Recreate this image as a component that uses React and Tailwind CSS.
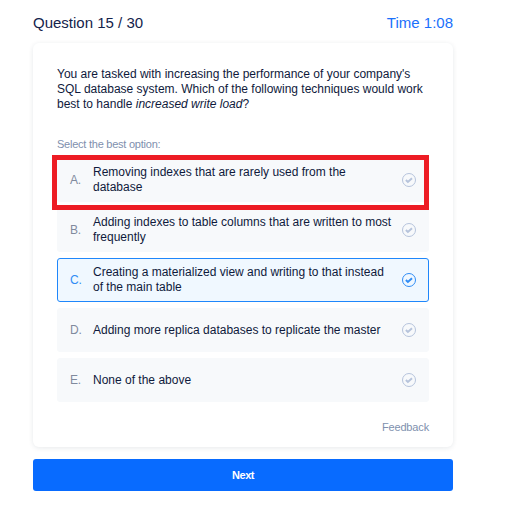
const options = [
  { letter: 'A.', lines: ['Removing indexes that are rarely used from the', 'database'], marked: true },
  { letter: 'B.', lines: ['Adding indexes to table columns that are written to most', 'frequently'] },
  { letter: 'C.', lines: ['Creating a materialized view and writing to that instead', 'of the main table'], selected: true },
  { letter: 'D.', lines: ['Adding more replica databases to replicate the master'] },
  { letter: 'E.', lines: ['None of the above'] },
];

function CheckCircle({ className }) {
  return (
    <svg className={className} width="14" height="14" viewBox="0 0 14 14" fill="none" stroke="currentColor">
      <circle cx="7" cy="7" r="6.5" strokeWidth="1" />
      <path d="M3.9 7 L5.9 9 L10 5.2" strokeWidth="1.9" />
    </svg>
  );
}

function Option({ letter, lines, selected, marked }) {
  return (
    <li
      className={`relative flex h-11 items-center rounded-[3px] border px-3 ${
        selected ? 'border-[#1f87fb] bg-[#f0f8ff]' : 'border-[#f7f9fb] bg-[#f7f9fb]'
      } ${marked ? 'z-10' : ''}`}
    >
      <span className={`w-[23px] shrink-0 text-[12px] tracking-[-0.2px] ${selected ? 'text-[#2f8cf5]' : 'text-[#808a9d]'}`}>{letter}</span>
      <span className="grow text-[12px] leading-[15px] whitespace-nowrap text-[#0f1a3c]">
        {lines.map((line) => (
          <span key={line} className="block">{line}</span>
        ))}
      </span>
      <CheckCircle className={`shrink-0 ${selected ? 'text-[#2f8cf5]' : 'text-[#b5c3db]'}`} />
      {marked && <div className="absolute -top-1 -left-1.5 h-[55px] w-[377px] border-5 border-[#ed1c24]" />}
    </li>
  );
}

export default function App() {
  return (
    <main className="h-[505px] w-[510px] bg-white pt-[13px] pr-[57px] pl-[33px] font-['Liberation_Sans',Arial,sans-serif]">
      <header className="flex h-[30px] justify-between text-[15px] leading-5">
        <h1 className="text-[#14234b]">Question 15 / 30</h1>
        <span className="text-[#1a70fb]">Time 1:08</span>
      </header>
      <section className="h-[404px] rounded-md bg-white px-6 pt-6 shadow-[0_1px_5px_rgba(20,40,60,0.1)]">
        <p className="text-[12px] leading-[15px] whitespace-nowrap text-[#0f1a3c]">
          You are tasked with increasing the performance of your company's
          <br />
          SQL database system. Which of the following techniques would work
          <br />
          best to handle <em>increased write load</em>?
        </p>
        <h2 className="mt-6 h-[22px] text-[11px] leading-4 tracking-[-0.24px] text-[#8090ae]">Select the best option:</h2>
        <ul className="flex flex-col gap-1.5">
          {options.map((option) => (
            <Option key={option.letter} {...option} />
          ))}
        </ul>
        <div className="mt-[17px] text-right text-[11px] leading-4 tracking-[-0.15px] text-[#8090ae]">Feedback</div>
      </section>
      <button className="mt-3 block h-8 w-full rounded-[3px] bg-[#086bff] text-[11px] font-bold tracking-[-0.4px] text-white">Next</button>
    </main>
  );
}
